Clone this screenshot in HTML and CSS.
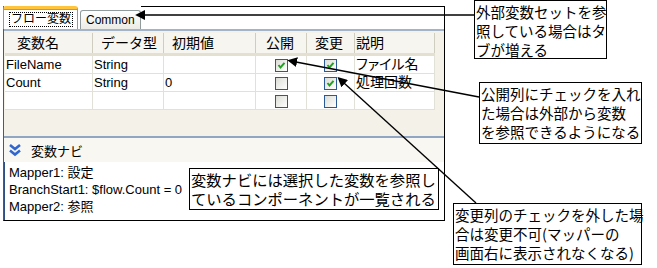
FILE: index.html
```html
<!DOCTYPE html>
<html lang="ja">
<head>
    <meta charset="UTF-8">
    <title>フロー変数</title>
    <link rel="stylesheet" href="styles.css">
</head>
<body>
    <div class="canvas">
        <div class="panel">
            <div class="tabs">
                <div class="tab active"><span class="focus">フロー変数</span></div>
                <div class="tab">Common</div>
                <div class="tab-rest"></div>
            </div>
            <div class="tab-body">
                <table class="vars">
                    <thead>
                        <tr>
                            <th class="c-name">変数名</th>
                            <th class="c-type">データ型</th>
                            <th class="c-init">初期値</th>
                            <th class="c-pub">公開</th>
                            <th class="c-chg">変更</th>
                            <th class="c-desc">説明</th>
                        </tr>
                    </thead>
                    <tbody>
                        <tr>
                            <td>FileName</td>
                            <td>String</td>
                            <td></td>
                            <td class="chk"><span class="box on"></span></td>
                            <td class="chk"><span class="box on"></span></td>
                            <td class="jp">ファイル名</td>
                        </tr>
                        <tr>
                            <td>Count</td>
                            <td>String</td>
                            <td>0</td>
                            <td class="chk"><span class="box"></span></td>
                            <td class="chk"><span class="box on"></span></td>
                            <td class="jp">処理回数</td>
                        </tr>
                        <tr>
                            <td></td>
                            <td></td>
                            <td></td>
                            <td class="chk"><span class="box"></span></td>
                            <td class="chk"><span class="box"></span></td>
                            <td></td>
                        </tr>
                    </tbody>
                </table>
            </div>
            <div class="nav-head">
                <svg class="chevron" width="14" height="14" viewBox="0 0 14 14">
                    <path d="M2 2 L7 6 L12 2" />
                    <path d="M2 7.5 L7 11.5 L12 7.5" />
                </svg>
                <span>変数ナビ</span>
            </div>
            <div class="nav-list">
                <div>Mapper1: 設定</div>
                <div>BranchStart1: $flow.Count = 0</div>
                <div>Mapper2: 参照</div>
            </div>
        </div>

        <!-- annotations -->
        <div class="note n1">外部変数セットを参<br>照している場合はタ<br>ブが増える</div>
        <div class="note n2">公開列にチェックを入れ<br>た場合は外部から変数<br>を参照できるようになる</div>
        <div class="note n3">変数ナビには選択した変数を参照し<br>ているコンポーネントが一覧される</div>
        <div class="note n4">変更列のチェックを外した場<br>合は変更不可(マッパーの<br>画面右に表示されなくなる)</div>

        <svg class="leaders" width="657" height="268" viewBox="0 0 657 268">
            <defs>
                <marker id="head" viewBox="0 0 10 10" refX="1" refY="5" markerWidth="7" markerHeight="7" orient="auto-start-reverse">
                    <path d="M0 0 L10 5 L0 10 z" fill="#000" />
                </marker>
            </defs>
            <line x1="144" y1="15" x2="474" y2="15" marker-start="url(#head)" />
            <line x1="296" y1="62" x2="479" y2="97" marker-start="url(#head)" />
            <line x1="344" y1="83" x2="476" y2="203" marker-start="url(#head)" />
        </svg>
    </div>
</body>
</html>
```

FILE: styles.css
```css
/* page */
body {
    margin: 0;
    padding: 0;
    background: #fff;
    font-family: "Liberation Sans", "Noto Sans CJK JP", sans-serif;
}

.canvas {
    position: relative;
    width: 657px;
    height: 268px;
    overflow: hidden;
}

/* window panel */
.panel {
    margin: 6px 0 0 3px;
    width: 442px;
    height: 215px;
    box-sizing: border-box;
    border: 1px solid #000;
    border-top: 0;
    border-left-color: #55595f;
    display: flex;
    flex-direction: column;
}

.tabs {
    display: flex;
    align-items: flex-end;
    height: 23px;
    margin-left: -1px;
    font-size: 12px;
}

.tab {
    height: 19px;
    box-sizing: border-box;
    margin-left: 2px;
    padding: 0 5px;
    border: 1px solid #919b9c;
    border-bottom: 0;
    border-radius: 3px 3px 0 0;
    background: linear-gradient(#ffffff, #ecebe5);
    display: flex;
    align-items: center;
    color: #000;
}

.tab.active {
    height: 23px;
    width: 75px;
    margin-left: 0;
    padding: 0 0 0 5px;
    background: #fff;
    border-top: 3px solid #ffc43c;
    box-shadow: inset 0 1px 0 #e68b2c;
}

.tab.active .focus {
    border: 1px dotted #000;
    padding: 0 1px;
    line-height: 13px;
}

.tab-rest {
    flex: 1;
    align-self: stretch;
    border-top: 1px solid #000;
}

.tab-body {
    height: 103px;
    border-top: 2px solid #a3b3c8;
    background: #f3f1e8;
    padding: 2px 0 0 1px;
}

/* variables table */
.vars {
    border-collapse: collapse;
    table-layout: fixed;
    width: 430px;
    background: #fff;
    font-size: 13px;
}

.vars th {
    height: 20px;
    padding: 0 0 0 8px;
    text-align: left;
    font-weight: normal;
    font-size: 14px;
    line-height: 18px;
    background: #f6f5ef;
    border-right: 1px solid #cfcdbf;
    border-bottom: 3px solid #e3e0d1;
    white-space: nowrap;
}

.vars th.c-name { width: 75px; padding-left: 12px; }
.vars th.c-type { width: 62px; }
.vars th.c-init { width: 83px; }
.vars th.c-pub  { width: 40px; padding-left: 10px; }
.vars th.c-chg  { width: 39px; }
.vars th.c-desc { padding-left: 1px; }

.vars td {
    height: 17px;
    padding: 0 0 0 1px;
    line-height: 17px;
    border-right: 1px solid #e2e1d8;
    border-bottom: 1px solid #e2e1d8;
    white-space: nowrap;
    overflow: hidden;
}

.vars td.jp {
    font-size: 14px;
    font-feature-settings: "palt";
}

.vars td.chk {
    text-align: center;
    padding: 0;
}

.box {
    display: inline-block;
    width: 13px;
    height: 13px;
    box-sizing: border-box;
    vertical-align: middle;
    border: 1px solid #2a5a96;
    background: linear-gradient(135deg, #dcdcd6, #ffffff);
}

.box.on {
    background-image:
        url("data:image/svg+xml,%3Csvg xmlns='http://www.w3.org/2000/svg' width='11' height='11'%3E%3Cpath d='M2.5 5 L4.5 7.5 L8.5 2.8' fill='none' stroke='%2321a121' stroke-width='2'/%3E%3C/svg%3E"),
        linear-gradient(135deg, #dcdcd6, #ffffff);
}

/* variable navigator */
.nav-head {
    height: 24px;
    border-top: 2px solid #91a6c3;
    background: #f8f7f2;
    display: flex;
    align-items: center;
    gap: 9px;
    padding-left: 4px;
    font-size: 13px;
}

.chevron path {
    fill: none;
    stroke: #2f66cf;
    stroke-width: 2.6;
}

.nav-list {
    flex: 1;
    background: #fff;
    border-left: 1px solid #2d4f86;
    padding: 2px 0 0 4px;
    font-size: 13px;
    line-height: 17px;
}

/* callouts */
.note {
    position: absolute;
    background: #fff;
    border: 1px solid #000;
    box-sizing: border-box;
    font-family: "Noto Sans CJK JP", sans-serif;
    font-size: 14.5px;
    line-height: 19px;
    padding: 1px 0 0 1px;
    white-space: nowrap;
    color: #000;
}

.n1 { left: 474px; top: 0; width: 133px; height: 59px; }
.n2 { left: 479px; top: 82px; width: 163px; height: 62px; }
.n3 { left: 189px; top: 168px; width: 250px; height: 42px; font-size: 15.3px; }
.n4 { left: 453px; top: 203px; width: 189px; height: 62px; }

.leaders {
    position: absolute;
    left: 0;
    top: 0;
    pointer-events: none;
}

.leaders line {
    stroke: #000;
    stroke-width: 1.4;
}
```
